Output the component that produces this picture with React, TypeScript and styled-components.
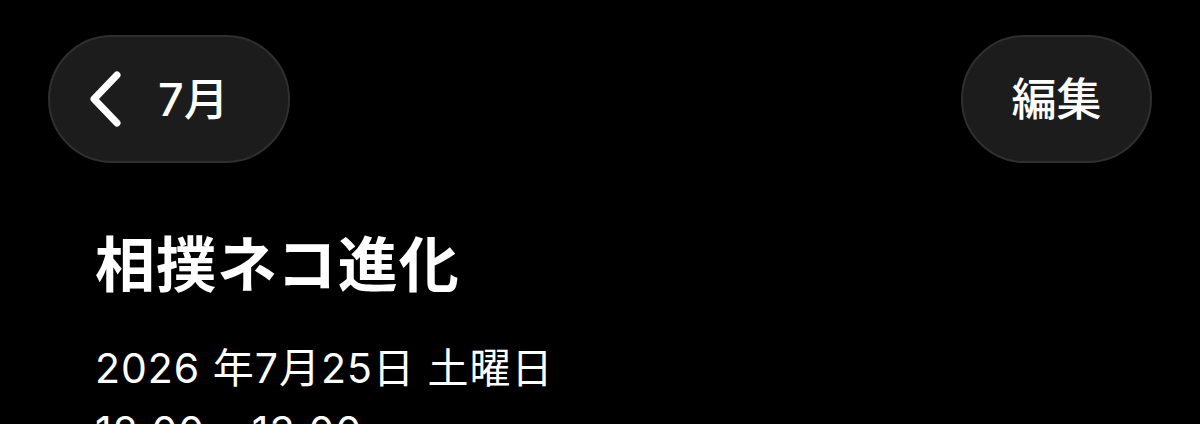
import React from "react";
import styled, { createGlobalStyle } from "styled-components";

const FONT = `Inter, "Noto Sans CJK JP", "Noto Sans", sans-serif`;

const Global = createGlobalStyle`
  html, body { margin: 0; padding: 0; background: #000; }
  body { font-family: ${FONT}; color: #fff; }
`;

const Page = styled.div`
  width: 1200px;
  height: 424px;
  overflow: hidden;
  background: #000;
  box-sizing: border-box;
  padding: 35px 48px 0 48px;
`;

const TopBar = styled.div`
  display: flex;
  justify-content: space-between;
  align-items: center;
`;

const PillButton = styled.button<{ $width: number }>`
  box-sizing: border-box;
  width: ${(p) => p.$width}px;
  height: 128px;
  border-radius: 64px;
  background: #1c1c1d;
  border: 2px solid #2f2f31;
  color: #fff;
  display: flex;
  align-items: center;
  justify-content: center;
  gap: 36px;
  padding: 0;
  font-family: ${FONT};
  font-size: 45px;
  font-weight: 500;
  cursor: pointer;
`;

const BackButton = styled(PillButton)`
  justify-content: flex-start;
  padding-left: 38px;
`;

const Label = styled.span`
  line-height: 1;
`;

const Content = styled.div`
  padding-left: 47px;
  padding-top: 66px;
`;

const Title = styled.h1`
  margin: 0;
  font-size: 60px;
  font-weight: 700;
  line-height: 72px;
  letter-spacing: 1px;
`;

const Meta = styled.div<{ $gap?: number }>`
  margin-top: ${(p) => p.$gap ?? 0}px;
  font-size: 41px;
  font-weight: 400;
  line-height: 63px;
  letter-spacing: 1px;
`;

const Chevron = () => (
  <svg width="34" height="56" viewBox="0 0 34 56" fill="none">
    <path d="M29 4 L6 28 L29 52" stroke="#fff" strokeWidth="7" strokeLinecap="round" strokeLinejoin="round" />
  </svg>
);

export default function App() {
  return (
    <>
      <Global />
      <Page>
        <TopBar>
          <BackButton $width={242}>
            <Chevron />
            <Label>7月</Label>
          </BackButton>
          <PillButton $width={191}>
            <Label>編集</Label>
          </PillButton>
        </TopBar>
        <Content>
          <Title>相撲ネコ進化</Title>
          <Meta $gap={36}>2026 年7月25日 土曜日</Meta>
          <Meta>12:00 – 13:00</Meta>
        </Content>
      </Page>
    </>
  );
}
